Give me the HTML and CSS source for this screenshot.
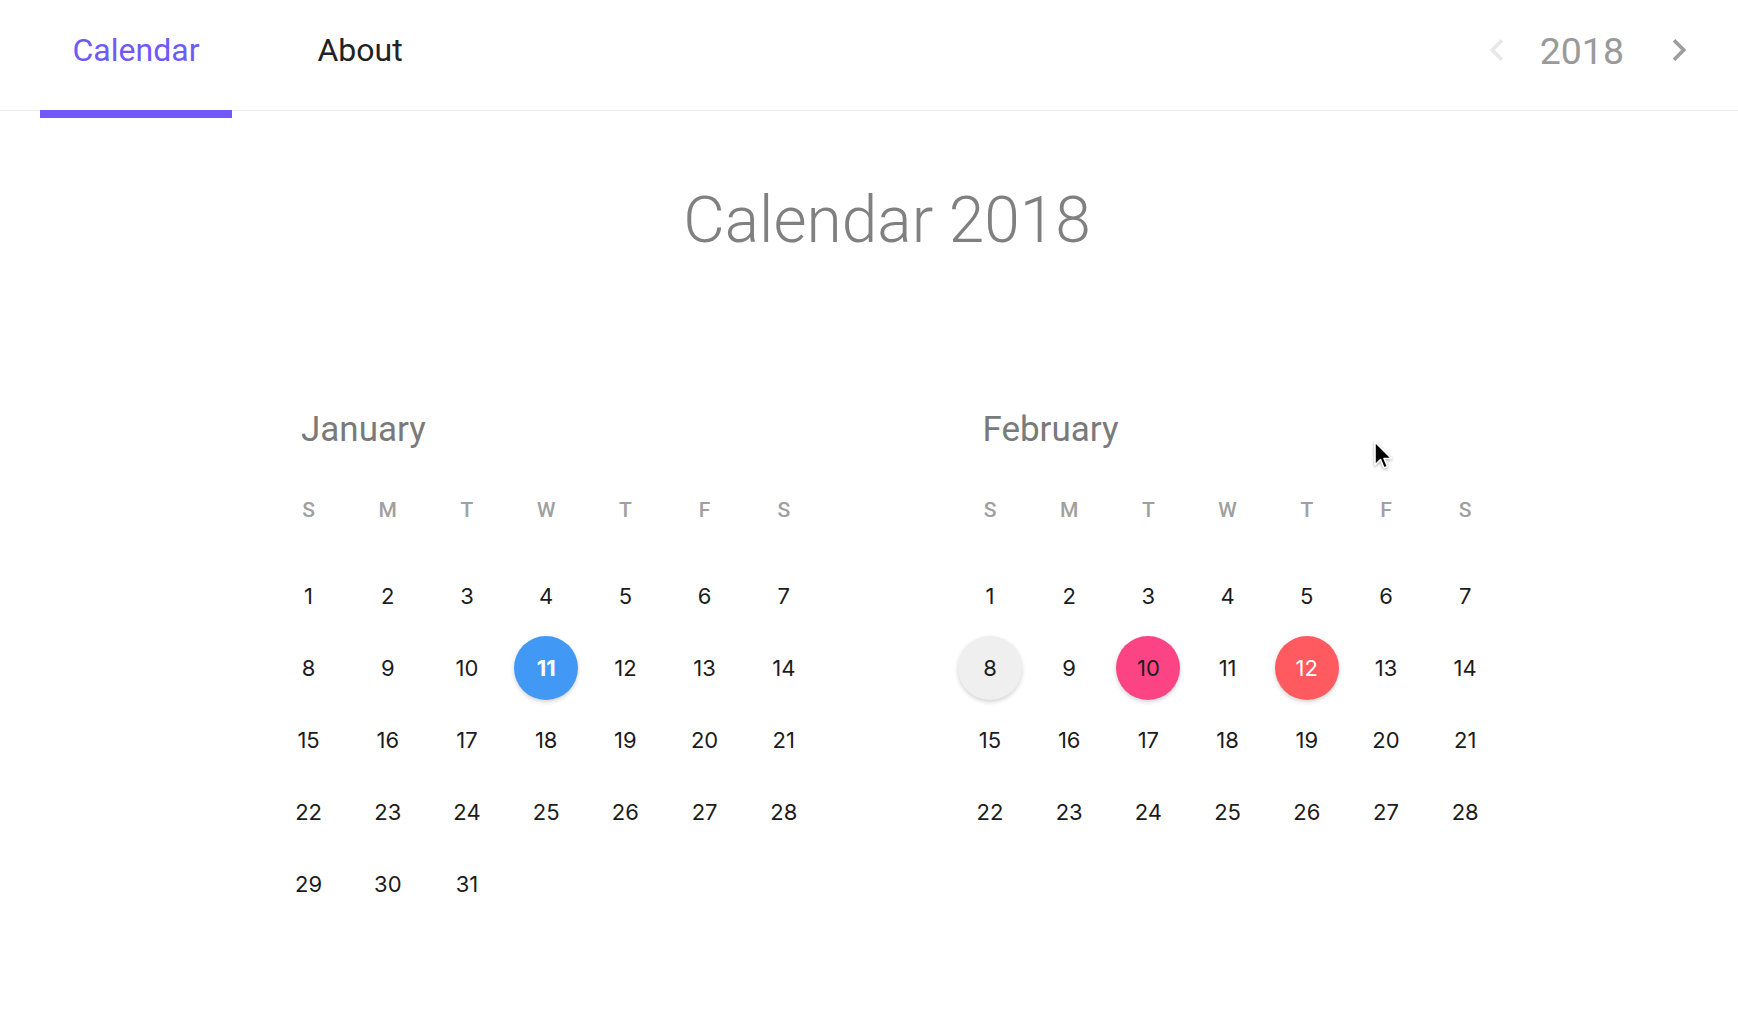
FILE: index.html
```html
<!DOCTYPE html>
<html lang="en">
<head>
<meta charset="utf-8">
<title>Calendar 2018</title>
<link rel="stylesheet" href="styles.css">
</head>
<body>
<header class="topbar">
  <nav class="tabs">
    <a class="tab active">Calendar</a>
    <a class="tab">About</a>
  </nav>
  <div class="year-nav">
    <span class="icon-btn disabled"><svg viewBox="0 0 24 24" width="44" height="44"><path d="M15.41 7.41L14 6l-6 6 6 6 1.41-1.41L10.83 12z" fill="currentColor"/></svg></span>
    <span class="year">2018</span>
    <span class="icon-btn"><svg viewBox="0 0 24 24" width="44" height="44"><path d="M10 6L8.59 7.41 13.17 12l-4.58 4.59L10 18l6-6z" fill="currentColor"/></svg></span>
  </div>
</header>
<div class="page">
  <main class="content">
    <h1 class="title">Calendar 2018</h1>
    <div class="months">
      <section class="month">
        <h2 class="month-name">January</h2>
        <div class="weekdays"><span>S</span><span>M</span><span>T</span><span>W</span><span>T</span><span>F</span><span>S</span></div>
        <div class="days">
          <div class="day"><span class="num">1</span></div>
          <div class="day"><span class="num">2</span></div>
          <div class="day"><span class="num">3</span></div>
          <div class="day"><span class="num">4</span></div>
          <div class="day"><span class="num">5</span></div>
          <div class="day"><span class="num">6</span></div>
          <div class="day"><span class="num">7</span></div>
          <div class="day"><span class="num">8</span></div>
          <div class="day"><span class="num">9</span></div>
          <div class="day"><span class="num">10</span></div>
          <div class="day"><span class="num today">11</span></div>
          <div class="day"><span class="num">12</span></div>
          <div class="day"><span class="num">13</span></div>
          <div class="day"><span class="num">14</span></div>
          <div class="day"><span class="num">15</span></div>
          <div class="day"><span class="num">16</span></div>
          <div class="day"><span class="num">17</span></div>
          <div class="day"><span class="num">18</span></div>
          <div class="day"><span class="num">19</span></div>
          <div class="day"><span class="num">20</span></div>
          <div class="day"><span class="num">21</span></div>
          <div class="day"><span class="num">22</span></div>
          <div class="day"><span class="num">23</span></div>
          <div class="day"><span class="num">24</span></div>
          <div class="day"><span class="num">25</span></div>
          <div class="day"><span class="num">26</span></div>
          <div class="day"><span class="num">27</span></div>
          <div class="day"><span class="num">28</span></div>
          <div class="day"><span class="num">29</span></div>
          <div class="day"><span class="num">30</span></div>
          <div class="day"><span class="num">31</span></div>
        </div>
      </section>
      <section class="month">
        <h2 class="month-name">February</h2>
        <div class="weekdays"><span>S</span><span>M</span><span>T</span><span>W</span><span>T</span><span>F</span><span>S</span></div>
        <div class="days">
          <div class="day"><span class="num">1</span></div>
          <div class="day"><span class="num">2</span></div>
          <div class="day"><span class="num">3</span></div>
          <div class="day"><span class="num">4</span></div>
          <div class="day"><span class="num">5</span></div>
          <div class="day"><span class="num">6</span></div>
          <div class="day"><span class="num">7</span></div>
          <div class="day"><span class="num hover">8</span></div>
          <div class="day"><span class="num">9</span></div>
          <div class="day"><span class="num pink">10</span></div>
          <div class="day"><span class="num">11</span></div>
          <div class="day"><span class="num red">12</span></div>
          <div class="day"><span class="num">13</span></div>
          <div class="day"><span class="num">14</span></div>
          <div class="day"><span class="num">15</span></div>
          <div class="day"><span class="num">16</span></div>
          <div class="day"><span class="num">17</span></div>
          <div class="day"><span class="num">18</span></div>
          <div class="day"><span class="num">19</span></div>
          <div class="day"><span class="num">20</span></div>
          <div class="day"><span class="num">21</span></div>
          <div class="day"><span class="num">22</span></div>
          <div class="day"><span class="num">23</span></div>
          <div class="day"><span class="num">24</span></div>
          <div class="day"><span class="num">25</span></div>
          <div class="day"><span class="num">26</span></div>
          <div class="day"><span class="num">27</span></div>
          <div class="day"><span class="num">28</span></div>
        </div>
      </section>
    </div>
  </main>
</div>
<svg class="cursor" viewBox="0 0 22 34" width="22" height="34">
  <path d="M2 2 L2 25 L7.5 19.5 L11 28 L14.5 26.5 L11 18.5 L18.5 18.5 Z" fill="#000" stroke="#fff" stroke-width="1.6" stroke-linejoin="round"/>
</svg>
</body>
</html>
```

FILE: styles.css
```css
html, body {
  margin: 0;
  padding: 0;
  background: #ffffff;
}

body {
  font-family: Roboto, "Liberation Sans", Arial, sans-serif;
  position: relative;
  min-height: 1034px;
}

.topbar {
  display: flex;
  justify-content: space-between;
  height: 110px;
  padding: 0 37px 0 40px;
  border-bottom: 1px solid #ededed;
}

.tabs {
  display: flex;
  gap: 32px;
}

.tab {
  position: relative;
  width: 192px;
  display: flex;
  justify-content: center;
  padding-top: 31px;
  box-sizing: border-box;
  font-size: 32px;
  line-height: 38px;
  color: #222222;
  cursor: pointer;
}

.tab.active {
  color: #6e5bf6;
}

.tab.active::after {
  content: "";
  position: absolute;
  left: 0;
  right: 0;
  top: 110px;
  height: 8px;
  background: #7059f6;
}

.year-nav {
  display: flex;
  align-items: flex-start;
}

.icon-btn {
  display: block;
  width: 44px;
  height: 44px;
  margin-top: 28px;
  color: #9e9e9e;
}

.icon-btn svg {
  display: block;
}

.icon-btn.disabled {
  color: #e8e8e8;
}

.year {
  margin: 30px 33px 0 21px;
  font-size: 37.5px;
  line-height: 43px;
  color: #9a9a9a;
}

.page {
  padding-left: 36px;
}

.content {
  width: 1236px;
  margin: 0 auto;
}

.title {
  margin: 72px 0 0;
  font-size: 64px;
  line-height: 75px;
  font-weight: 300;
  color: #808080;
  text-align: center;
}

.months {
  display: grid;
  grid-template-columns: 554.4px 554.4px;
  column-gap: 127px;
  margin-top: 151px;
}

.month-name {
  margin: 0;
  padding-left: 32px;
  font-size: 35px;
  line-height: 41px;
  font-weight: 400;
  color: #7a7a7a;
}

.weekdays {
  display: grid;
  grid-template-columns: repeat(7, 1fr);
  height: 50px;
  margin-top: 35px;
  align-items: center;
  justify-items: center;
  font-size: 21px;
  font-weight: 500;
  color: #a0a0a0;
}

.days {
  display: grid;
  grid-template-columns: repeat(7, 1fr);
  grid-auto-rows: 72px;
  margin-top: 25px;
}

.day {
  display: flex;
  align-items: center;
  justify-content: center;
}

.num {
  display: flex;
  align-items: center;
  justify-content: center;
  width: 64px;
  height: 64px;
  border-radius: 50%;
  font-family: Inter, "Open Sans", sans-serif;
  font-size: 22px;
  color: #1c1c1c;
}

.num.today {
  background: #4299f5;
  color: #ffffff;
  font-weight: 700;
  box-shadow: 0 2px 4px rgba(0, 0, 0, 0.18);
}

.num.hover {
  background: #efefef;
  box-shadow: 0 2px 4px rgba(0, 0, 0, 0.18);
}

.num.pink {
  background: #fc4384;
  box-shadow: 0 2px 4px rgba(0, 0, 0, 0.18);
}

.num.red {
  background: #ff5a5f;
  color: #ffffff;
  box-shadow: 0 2px 4px rgba(0, 0, 0, 0.18);
}

.cursor {
  position: absolute;
  left: 1373px;
  top: 440px;
  filter: drop-shadow(0 1px 1.5px rgba(0, 0, 0, 0.35));
}
```
